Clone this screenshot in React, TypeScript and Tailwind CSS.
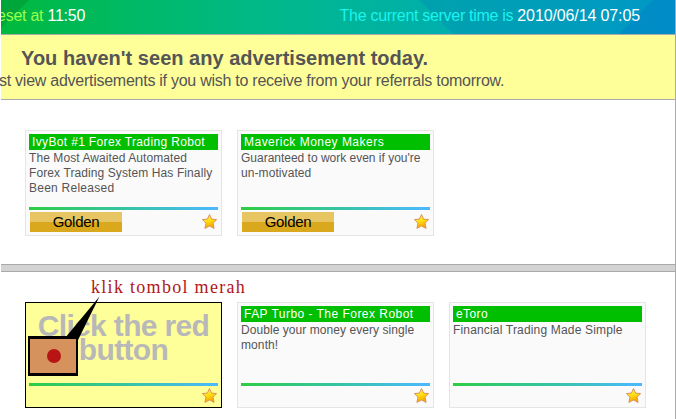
interface Ad {
  title: string;
  titleTracking: string;
  lines: { text: string; tracking: string }[];
  golden?: boolean;
}

const viewedAds: Ad[] = [
  {
    title: 'IvyBot #1 Forex Trading Robot',
    titleTracking: 'tracking-[0.35px]',
    lines: [
      { text: 'The Most Awaited Automated', tracking: 'tracking-[0.08px]' },
      { text: 'Forex Trading System Has Finally', tracking: 'tracking-[0.1px]' },
      { text: 'Been Released', tracking: 'tracking-[0.25px]' },
    ],
    golden: true,
  },
  {
    title: 'Maverick Money Makers',
    titleTracking: 'tracking-[0.48px]',
    lines: [
      { text: "Guaranteed to work even if you're", tracking: 'tracking-[-0.01px]' },
      { text: 'un-motivated', tracking: 'tracking-[0.08px]' },
    ],
    golden: true,
  },
];

const standardAds: Ad[] = [
  {
    title: 'FAP Turbo - The Forex Robot',
    titleTracking: 'tracking-[0.47px]',
    lines: [
      { text: 'Double your money every single', tracking: 'tracking-[0.06px]' },
      { text: 'month!', tracking: 'tracking-[0.1px]' },
    ],
  },
  {
    title: 'eToro',
    titleTracking: 'tracking-[0.4px]',
    lines: [{ text: 'Financial Trading Made Simple', tracking: 'tracking-[0.17px]' }],
  },
];

function StarIcon() {
  return (
    <svg width="15" height="15" viewBox="0 0 15 15" className="block">
      <defs>
        <linearGradient id="star" x1="0" y1="0" x2="0.3" y2="1">
          <stop offset="0" stopColor="#ffe98a" />
          <stop offset="0.5" stopColor="#ffe414" />
          <stop offset="1" stopColor="#f7a400" />
        </linearGradient>
      </defs>
      <path
        d="M7.5 0.5 L9.6 5.1 L14.6 5.6 L11 9.1 L12.1 14.4 L7.5 11.9 L2.9 14.4 L4 9.1 L0.4 5.6 L5.4 5.1 Z"
        fill="url(#star)"
        stroke="#d9935a"
        strokeWidth="1"
        strokeLinejoin="round"
      />
    </svg>
  );
}

function CardFooter({ golden }: { golden?: boolean }) {
  return (
    <div className="mt-auto">
      <div className="h-[3px] bg-linear-to-r from-[#2ecc40] via-[#36c4a0] to-[#4db8ff]" />
      <div className={`flex items-start justify-between px-px pt-[2px] ${golden ? 'h-[25px]' : 'h-[21px]'}`}>
        {golden ? (
          <div className="h-5 w-[92px] bg-linear-to-b from-[#e6c562] from-50% to-[#daa81c] to-50% text-center text-[15px] leading-5 tracking-[-0.3px] text-black">
            Golden
          </div>
        ) : (
          <span />
        )}
        <div className={golden ? 'pt-[2px]' : ''}>
          <StarIcon />
        </div>
      </div>
    </div>
  );
}

function AdCard({ ad }: { ad: Ad }) {
  return (
    <div className="flex h-[106px] w-[197px] shrink-0 flex-col border border-[#e5e5e5] bg-[#fafafa] px-[3px] pt-[3px]">
      <div className={`h-4 bg-[#00bf00] pl-[3px] text-xs leading-[17px] whitespace-nowrap text-white ${ad.titleTracking}`}>
        {ad.title}
      </div>
      <div className="pt-px text-xs leading-[15px] text-[#555]">
        {ad.lines.map((line) => (
          <p key={line.text} className={`whitespace-nowrap ${line.tracking}`}>
            {line.text}
          </p>
        ))}
      </div>
      <CardFooter golden={ad.golden} />
    </div>
  );
}

function ActiveCard() {
  return (
    <div className="relative flex h-[106px] w-[197px] shrink-0 flex-col border border-black bg-[#ffff99] px-[3px] pt-[11px]">
      <p className="text-center text-[30px] leading-6 font-bold tracking-[-0.65px] text-[#b8b8b8]">
        Click the red
        <br />
        button
      </p>
      <CardFooter />
      {/* callout from the label to the red button */}
      <svg width="80" height="90" viewBox="0 0 80 90" className="absolute -top-[7px] left-0">
        <path d="M73.5 0.5 L39 42 L52 44 Z" fill="#000" />
        <rect x="2" y="40" width="50" height="40" fill="#000" />
        <rect x="4" y="43" width="46" height="34" fill="#d6925c" />
        <circle cx="28" cy="60" r="7" fill="#b81414" />
      </svg>
    </div>
  );
}

export default function App() {
  return (
    <div className="h-[419px] w-[676px] overflow-hidden bg-white pl-px font-['Liberation_Sans',Arial,sans-serif]">
      <div className="h-full border-r border-[#aaa]">
        <header className="relative flex h-[34px] justify-between overflow-hidden bg-linear-to-r from-[#00b93a] via-[#00b88c] via-42% to-[#009fd6] pr-[35px] text-base leading-8">
          <svg width="675" height="34" viewBox="0 0 675 34" className="absolute inset-0">
            <path d="M0 0 H28 L0 28 Z" fill="#00a639" />
            <path d="M418 0 H675 V34 H452 Z" fill="#0090b4" fillOpacity="0.45" />
            <path d="M652 0 H675 V34 H618 Z" fill="#0086c8" fillOpacity="0.6" />
          </svg>
          <p className="relative -ml-[4px] tracking-[-0.25px] whitespace-nowrap text-[#9bff4b]">
            eset at <span className="text-white">11:50</span>
          </p>
          <p className="relative tracking-[-0.3px] whitespace-nowrap text-[#19f5ee]">
            The current server time is <span className="tracking-[-0.12px] text-white">2010/06/14 07:05</span>
          </p>
        </header>

        <div className="h-[66px] border-y border-[#aaa] bg-[#ffff99] text-[#555]">
          <h1 className="pt-[11px] pl-5 text-xl leading-6 font-bold tracking-[0.02px] whitespace-nowrap">
            You haven't seen any advertisement today.
          </h1>
          <p className="-ml-[2px] text-base leading-[22px] tracking-[-0.26px] whitespace-nowrap">
            st view advertisements if you wish to receive from your referrals tomorrow.
          </p>
        </div>

        <section className="flex h-[164px] gap-[15px] pt-[30px] pl-6">
          {viewedAds.map((ad) => (
            <AdCard key={ad.title} ad={ad} />
          ))}
        </section>

        <div className="h-2 border-y border-[#aaa] bg-[#d3d3d3]" />

        <section className="relative flex gap-[15px] pt-[30px] pl-6">
          <ActiveCard />
          {standardAds.map((ad) => (
            <AdCard key={ad.title} ad={ad} />
          ))}
          <span className="absolute top-[5px] left-[90px] font-['Liberation_Serif',serif] text-lg leading-5 tracking-[1.3px] whitespace-nowrap text-[#b01818]">
            klik tombol merah
          </span>
        </section>
      </div>
    </div>
  );
}
